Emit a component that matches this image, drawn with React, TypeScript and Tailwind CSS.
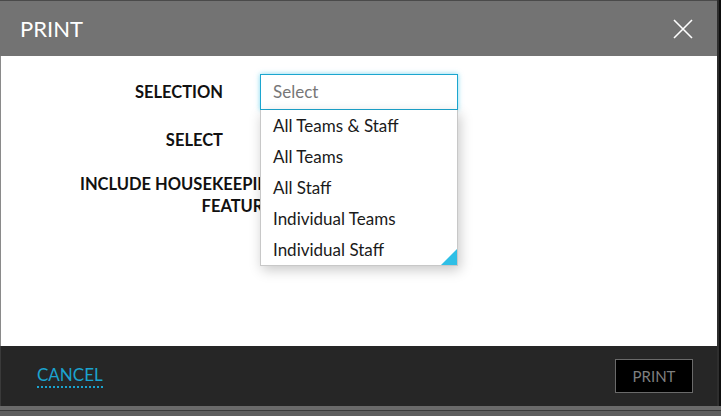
import React from "react";

const items = ["All Teams & Staff", "All Teams", "All Staff", "Individual Teams", "Individual Staff"];

export default function App() {
  return (
    <div className="w-[721px] h-[416px] overflow-hidden bg-[#5a5a5a] flex flex-col" style={{ fontFamily: "Lato, 'Liberation Sans', sans-serif" }}>
      <div className="flex h-[406px]">
        <div className="w-[717px] h-full flex flex-col border-t border-[#4a4a4a] relative">
          {/* header */}
          <div className="h-[55px] bg-[#737373] flex items-center justify-between pl-[20px] pr-[24px] shrink-0">
            <span className="text-white text-[22px] leading-none">PRINT</span>
            <svg width="20" height="20" viewBox="0 0 20 20" className="mt-[1px]">
              <path d="M1 1 L19 19 M19 1 L1 19" stroke="#ffffff" strokeWidth="1.6" fill="none" />
            </svg>
          </div>
          {/* body */}
          <div className="flex-1 bg-white border-l border-[#8a8a8a] relative">
            <div className="flex flex-col pt-[18px]">
              <div className="flex items-center h-[36px]">
                <div className="w-[222px] text-right font-bold text-[16.5px] text-[#111]">SELECTION</div>
                <div className="ml-[37px] w-[198px] h-[36px] border border-[#1ca6cf] shadow-[0_0_5px_rgba(40,190,230,0.6)] flex items-center pl-[12px] text-[17px] text-[#777]">
                  Select
                </div>
              </div>
              <div className="flex items-center h-[38px] mt-[11px]">
                <div className="w-[222px] text-right font-bold text-[16.5px] text-[#111]">SELECT</div>
                <div className="ml-[37px] w-[198px] h-[38px] border border-[#8a8a8a] bg-white"></div>
              </div>
              <div className="flex mt-[14px]">
                <div className="w-[281px] text-right font-bold text-[16.5px] leading-[22px] text-[#111] whitespace-nowrap">
                  INCLUDE HOUSEKEEPING
                  <br />
                  FEATURES
                </div>
              </div>
            </div>
            {/* dropdown */}
            <div className="absolute left-[259px] top-[54px] w-[198px] bg-white border border-[#c8c8c8] border-t-0 shadow-[2px_4px_12px_rgba(0,0,0,0.22)]">
              {items.map((t) => (
                <div key={t} className="h-[31px] flex items-center pl-[12px] text-[17px] text-[#1a1a1a]">
                  {t}
                </div>
              ))}
              <svg width="16" height="16" viewBox="0 0 16 16" className="absolute right-0 bottom-0">
                <polygon points="16,0 16,16 0,16" fill="#2fbfe6" />
              </svg>
            </div>
          </div>
          {/* footer */}
          <div className="h-[60px] bg-[#262626] border-l border-[#3a3a3a] flex items-center justify-between pl-[36px] pr-[24px] shrink-0">
            <span className="text-[#1ba3cf] text-[17px] leading-[20px] border-b-2 border-dotted border-[#1ba3cf] pb-[1px]">CANCEL</span>
            <div className="w-[78px] h-[34px] bg-black border border-[#6a6a6a] flex items-center justify-center text-[#7f7f7f] text-[15px]">
              PRINT
            </div>
          </div>
        </div>
        <div className="w-[4px] h-full flex">
          <div className="w-[2px] bg-[#2e2e2e]"></div>
          <div className="w-[2px] bg-[#0e0e0e]"></div>
        </div>
      </div>
      <div className="flex-1 bg-[#5c5c5c] flex flex-col">
        <div className="h-[4px] bg-[#6a6a6a]"></div>
        <div className="h-[1px] bg-[#3a3a3a]"></div>
        <div className="flex-1 bg-[#5e5e5e]"></div>
      </div>
    </div>
  );
}
